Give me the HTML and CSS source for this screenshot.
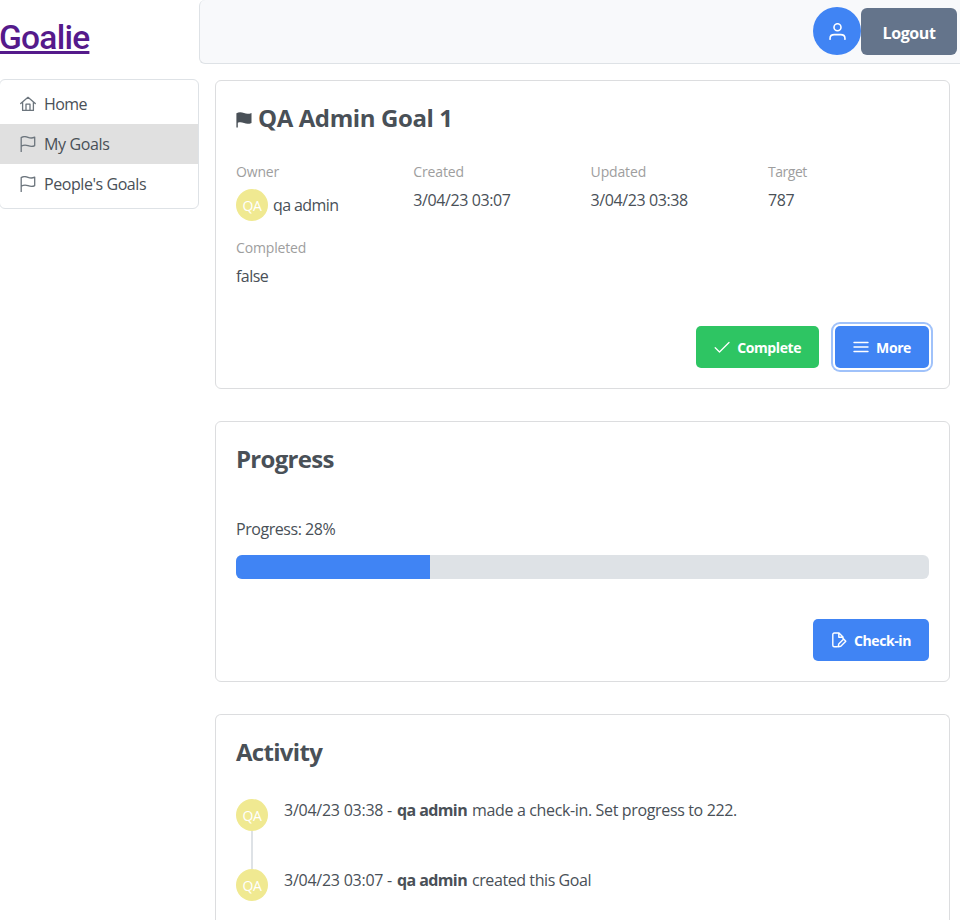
FILE: index.html
```html
<!DOCTYPE html>
<html lang="en">
<head>
<meta charset="utf-8">
<title>Goalie</title>
<link rel="stylesheet" href="styles.css">
</head>
<body>
<svg class="defs" aria-hidden="true">
  <symbol id="flag" viewBox="0 0 16 16"><path d="M1.2 15.7V1.6C3.5.2 5.700.4 8 1.300S12.500 2.300 14.700 1.100V9.600C12.500 10.900 10.300 10.600 8 9.700S3.500 8.900 1.200 10.200" fill="none" stroke="currentColor" stroke-width="1.300" stroke-linejoin="round" stroke-linecap="round"/></symbol>
</svg>
<div class="app">
  <aside class="sidebar">
    <a class="brand" href="#">Goalie</a>
    <nav class="menu">
      <a class="item"><svg class="icon" viewBox="0 0 16 16"><path d="M.7 7.500 8 1.300l7.300 6.200M2.600 6v8.400h10.800V6M6 14.200V8.200h4v6" fill="none" stroke="currentColor" stroke-width="1.300" stroke-linejoin="round" stroke-linecap="round"/></svg><span class="t-home">Home</span></a>
      <a class="item active"><svg class="icon"><use href="#flag"/></svg><span class="t-my">My Goals</span></a>
      <a class="item"><svg class="icon"><use href="#flag"/></svg><span class="t-people">People's Goals</span></a>
    </nav>
  </aside>
  <div class="content">
    <header class="topbar">
      <button class="user"><svg viewBox="0 0 16 16"><path d="M1 15.300v-1C1 12 2.700 10.900 5 10.900h6c2.300 0 4 1.100 4 3.400v1" fill="none" stroke="currentColor" stroke-width="1.500" stroke-linecap="round"/><circle cx="8" cy="4" r="3.300" fill="none" stroke="currentColor" stroke-width="1.500"/></svg></button>
      <button class="logout">Logout</button>
    </header>
    <main>
      <section class="card goal">
        <h2><svg class="title-flag" viewBox="0 0 16 16"><path d="M.4 15.500V1.200C3-.1 5.500.1 8 1.100s5 .9 7.500-.2v10c-2.500 1.200-5 1.200-7.500.2s-4.500-.9-6.200-.3v4.700z" fill="currentColor"/></svg><span class="t-title">QA Admin Goal 1</span></h2>
        <dl class="facts">
          <div><dt>Owner</dt><dd class="owner"><span class="avatar">QA</span><span class="t-owner">qa admin</span></dd></div>
          <div><dt>Created</dt><dd class="date">3/04/23 03:07</dd></div>
          <div><dt>Updated</dt><dd class="date">3/04/23 03:38</dd></div>
          <div><dt class="t-target">Target</dt><dd class="date">787</dd></div>
          <div><dt>Completed</dt><dd class="t-false">false</dd></div>
        </dl>
        <div class="actions">
          <button class="btn green"><svg viewBox="0 0 16 16"><path d="M1.200 8.800 5.500 13 15 3.500" fill="none" stroke="currentColor" stroke-width="1.300" stroke-linecap="round" stroke-linejoin="round"/></svg><span class="t-complete">Complete</span></button>
          <button class="btn focus"><svg viewBox="0 0 16 16"><path d="M1 3.500h14M1 8h14M1 12.500h14" fill="none" stroke="currentColor" stroke-width="1.400" stroke-linecap="round"/></svg><span class="t-more">More</span></button>
        </div>
      </section>
      <section class="card progress">
        <h2><span class="t-progress">Progress</span></h2>
        <p>Progress: 28%</p>
        <div class="bar"><div class="fill" style="width:28%"></div></div>
        <div class="actions">
          <button class="btn"><svg viewBox="0 0 16 16"><path d="M6 14.700H3.300Q1.800 14.700 1.800 13.200V2.500Q1.800 1 3.300 1H8l4 4v1.500M7.800 1v4.300h4M7.200 14.800l.5-2.700 5-5 2.100 2.100-5 5z" fill="none" stroke="currentColor" stroke-width="1.400" stroke-linecap="round" stroke-linejoin="round"/></svg><span class="t-check">Check-in</span></button>
        </div>
      </section>
      <section class="card activity">
        <h2><span class="t-activity">Activity</span></h2>
        <div class="event"><div class="rail"><span class="avatar">QA</span><i class="line"></i></div><p><span class="when">3/04/23 03:38 -</span><b>qa admin</b><span class="t-made">made a check-in. Set progress to 222.</span></p></div>
        <div class="event"><div class="rail"><span class="avatar">QA</span></div><p><span class="when">3/04/23 03:07 -</span><b>qa admin</b><span class="t-created">created this Goal</span></p></div>
      </section>
    </main>
  </div>
</div>
</body>
</html>
```
FILE: styles.css
```css
* { box-sizing: border-box; }
body { margin: 0; height: 920px; overflow: hidden; background: #fff; color: #495057; font: 16px/24px "Segoe UI", "Open Sans", "Noto Sans", sans-serif; letter-spacing: -.35px; }
.defs { position: absolute; width: 0; height: 0; }
.app { display: grid; grid-template-columns: 199px 761px; height: 920px; overflow: hidden; }
.brand { display: block; height: 79px; padding-top: 18px; margin-left: -1px; font: 500 33.5px/40px Roboto, sans-serif; letter-spacing: -.75px; color: #551a8b; text-decoration: underline; }
.menu { border: 1px solid #dee2e6; border-radius: 6px; padding: 4px 0; height: 130px; margin-left: -1px; }
.item { display: flex; align-items: center; height: 40px; padding-left: 20px; gap: 8px; }
.item .icon { width: 16px; height: 16px; color: #6c757d; }
.item.active { background: #e0e0e0; }
.t-people { letter-spacing: -.43px; }
.t-home { letter-spacing: -.6px; }
span, b { white-space: nowrap; }
.topbar { height: 64px; background: #f8f9fb; border: 1px solid #dee2e6; border-width: 0 0 1px 1px; border-radius: 6px 0 0 6px; padding: 7px 3px 0 0; display: flex; justify-content: flex-end; }
button { font-family: inherit; border: 0; color: #fff; font-weight: 700; padding: 0; letter-spacing: -.4px; }
.user { width: 48px; height: 48px; border-radius: 50%; background: #4084f4; display: flex; align-items: center; justify-content: center; }
.user svg { width: 17px; height: 17px; }
.logout { margin-top: 1px; width: 96px; height: 47px; border-radius: 6px; background: #64748b; font-size: 16px; padding-top: 2px; }
main { padding: 16px 10px 0 16px; display: flex; flex-direction: column; gap: 32px; }
.card { border: 1px solid #dcdddf; border-radius: 6px; padding: 20px; }
.goal { height: 309px; }
.progress { height: 261px; }
.activity { height: 206px; border-bottom: 0; border-radius: 6px 6px 0 0; padding-bottom: 0; }
h2 { margin: 0; height: 36px; line-height: 34px; font-size: 24px; font-weight: 700; display: flex; align-items: center; gap: 6px; letter-spacing: -.4px; }
h2 span { margin-top: -2px; }
.t-progress, .t-activity { letter-spacing: -.7px; }
.title-flag { width: 16px; height: 16px; margin-top: 1px; }
.facts { margin: 23px 0 0; display: grid; grid-template-columns: repeat(4, 177.3px); grid-auto-rows: 76px; height: 166px; }
dt { font-size: 14px; line-height: 24px; color: #9e9e9e; letter-spacing: -.15px; }
.t-target { letter-spacing: -.45px; }
dd { margin: 4px 0 0; }
.date { letter-spacing: -.4px; }
.t-false { letter-spacing: -.55px; }
.owner { display: flex; align-items: center; gap: 5px; height: 33px; margin-top: 4px; }
.t-owner { letter-spacing: -.6px; }
.avatar { width: 32px; height: 32px; flex: none; border-radius: 50%; background: #f0e991; color: #fff; font-size: 14px; line-height: 33px; text-align: center; }
.actions { display: flex; justify-content: flex-end; gap: 16px; }
.btn { height: 42px; border-radius: 5px; background: #4084f4; font-size: 14px; padding: 0 18px; display: flex; align-items: center; gap: 7px; }
.btn svg { width: 16px; height: 16px; flex: none; }
.btn span { padding-top: 1px; }
.green { background: #2ec563; }
.focus { box-shadow: 0 0 0 2px #fff, 0 0 0 4px #a0c2fa; }
.progress p { margin: 39px 0 14px; line-height: 24px; letter-spacing: -.45px; }
.bar { height: 24px; border-radius: 6px; background: #dee2e6; overflow: hidden; margin-bottom: 40px; }
.fill { height: 100%; background: #4084f4; }
.activity h2 { margin-bottom: 28px; }
.event { display: flex; gap: 16px; height: 70px; }
.event p { margin: -1px 0 0; display: flex; gap: 4px; }
.when { width: 109px; letter-spacing: -.25px; }
.event b { width: 71px; letter-spacing: -.6px; }
.t-made { letter-spacing: -.35px; }
.t-created { letter-spacing: -.42px; }
.rail { display: flex; flex-direction: column; align-items: center; }
.line { flex: 1; width: 2px; background: #dee2e6; }
```
